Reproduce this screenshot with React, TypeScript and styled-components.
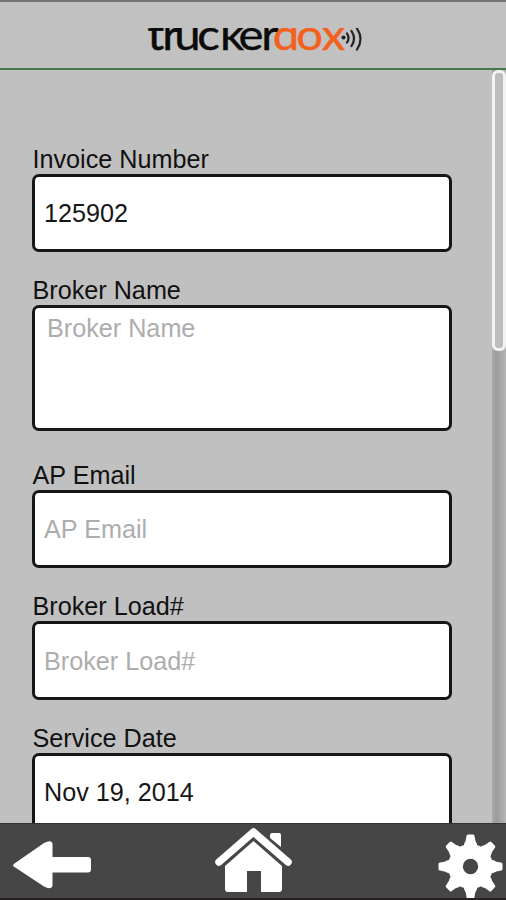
import React from 'react';
import styled, { createGlobalStyle } from 'styled-components';

const GlobalStyle = createGlobalStyle`
  * { box-sizing: border-box; }
  body { margin: 0; overflow: hidden; }
`;

const Screen = styled.div`
  width: 506px;
  height: 900px;
  display: flex;
  flex-direction: column;
  background: #c0c0c0;
  font-family: "Liberation Sans", Arial, sans-serif;
  color: #111;
  overflow: hidden;
`;

const Header = styled.header`
  flex: none;
  height: 70px;
  display: flex;
  border-top: 2px solid #747474;
  border-bottom: 2px solid #447a4c;
  background: #c1c1c1;
  padding: 26px 0 0 144px;
`;

const Content = styled.main`
  flex: none;
  height: 753px;
  display: flex;
  justify-content: space-between;
  overflow: hidden;
`;

const Form = styled.form`
  width: 420px;
  margin: 74px 0 0 32px;
`;

const Field = styled.div<{ $gap?: number }>`
  margin-bottom: ${({ $gap = 23 }) => $gap}px;
`;

const Label = styled.label`
  display: block;
  height: 30px;
  line-height: 30px;
  padding-left: 0.5px;
  font-size: 25.2px;
  white-space: nowrap;
`;

const Control = styled.div<{ $height?: number; $placeholder?: boolean; $multiline?: boolean }>`
  height: ${({ $height = 78 }) => $height}px;
  display: flex;
  align-items: ${({ $multiline }) => ($multiline ? 'flex-start' : 'center')};
  padding: ${({ $multiline }) => ($multiline ? '5px 12px' : '0 9px')};
  border: 3px solid #161616;
  border-radius: 7px;
  background: #fff;
  color: ${({ $placeholder }) => ($placeholder ? '#adadad' : '#161616')};
  font-size: 25.2px;
  line-height: 30px;
`;

const ScrollTrack = styled.div`
  width: 14px;
  height: 100%;
  background: linear-gradient(90deg, #aaa 0, #9c9c9c 30%, #b5b5b5 100%);
`;

const ScrollThumb = styled.div`
  width: 14px;
  height: 281px;
  border: 3px solid #f3f3f3;
  border-radius: 6px;
  background: #bdbdbd;
`;

const Toolbar = styled.nav`
  flex: none;
  height: 77px;
  display: grid;
  grid-template-columns: 200px 226px 80px;
  background: #464646;
  border-top: 1px solid #333;
  border-bottom: 2px solid #252122;
`;

const ToolButton = styled.button<{ $width: number }>`
  width: ${({ $width }) => $width}px;
  height: 74px;
  padding: 0;
  border: 0;
  background: none;
  svg { display: block; }
`;

const Logo = () => (
  <svg width="222" height="28" viewBox="144 28 222 28" role="img" aria-label="truckerdox">
    <g fontFamily="Lato, sans-serif" fontSize="43" transform="translate(144 0) scale(1.1 1)" strokeWidth="0.4">
      <text y="49.800" x="3 16.5 27.5 48.5 69 86 106.5" fill="#0b0b0b" stroke="#0b0b0b">trucker</text>
      <text y="49.800" x="117 138.5 161.5" fill="#f4601d" stroke="#f4601d">dox</text>
    </g>
    <g fill="none" stroke="#222" strokeWidth="2.200" strokeLinecap="round">
      <circle cx="343.500" cy="37.500" r="1" fill="#222" />
      <path d="M347 33.500q3 4.500 0 9M351.500 31q5 7.500 0 15M357 28.500q7 10.500 0 21" />
    </g>
  </svg>
);

const BackIcon = () => (
  <svg width="110" height="74" viewBox="0 824 110 74">
    <path d="M14.500 863.500 44 843q8-4 8.500 1v13H88q3 0 3 3v9.500q0 3-3 3H52.500v13q-1 5-8.500 1L14.500 867q-3-1.700 0-3.500Z" fill="#fff" />
  </svg>
);

const HomeIcon = () => (
  <svg width="110" height="74" viewBox="200 824 110 74">
    <path d="M270 835q0-2 2-2h7q2 0 2 2v12l-11-9Z" fill="#fff" />
    <path d="M219 862 253.500 832 288 862" fill="none" stroke="#fff" strokeWidth="7.500" strokeLinejoin="round" strokeLinecap="round" />
    <path d="M225 866 253.500 841 282 866v23q0 3-3 3h-18v-21h-14v21h-19q-3 0-3-3Z" fill="#fff" />
  </svg>
);

const GearIcon = () => (
  <svg width="80" height="74" viewBox="426 824 80 74">
    <g fill="#fff">
      {[0, 45, 90, 135].map((angle) => (
        <path key={angle} transform={`rotate(${angle} 470.500 866.500)`} d="M464 844q2-3 2.500-8 0-1.500 1.500-1.500h5q1.500 0 1.500 1.500.5 5 2.500 8v45q-2 3-2.500 8 0 1.500-1.500 1.500h-5q-1.500 0-1.500-1.500-.5-5-2.500-8Z" />
      ))}
      <circle cx="470.500" cy="866.500" r="22.500" />
    </g>
    <circle cx="470.500" cy="866.500" r="7.700" fill="#464646" />
  </svg>
);

export default function App() {
  return (
    <>
      <GlobalStyle />
      <Screen>
        <Header><Logo /></Header>
        <Content>
          <Form>
            <Field><Label>Invoice Number</Label><Control>125902</Control></Field>
            <Field $gap={29}>
              <Label>Broker Name</Label>
              <Control $height={126} $multiline $placeholder>Broker Name</Control>
            </Field>
            <Field><Label>AP Email</Label><Control $placeholder>AP Email</Control></Field>
            <Field><Label>Broker Load#</Label><Control $height={79} $placeholder>Broker Load#</Control></Field>
            <Field><Label>Service Date</Label><Control $height={77}>Nov 19, 2014</Control></Field>
          </Form>
          <ScrollTrack><ScrollThumb /></ScrollTrack>
        </Content>
        <Toolbar>
          <ToolButton $width={110} aria-label="Back"><BackIcon /></ToolButton>
          <ToolButton $width={110} aria-label="Home"><HomeIcon /></ToolButton>
          <ToolButton $width={80} aria-label="Settings"><GearIcon /></ToolButton>
        </Toolbar>
      </Screen>
    </>
  );
}
